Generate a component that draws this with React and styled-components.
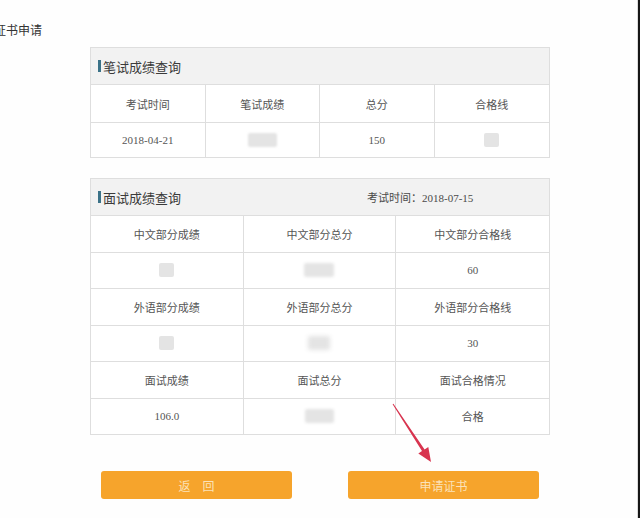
import styled, { createGlobalStyle } from "styled-components";

const Global = createGlobalStyle`
  html, body {
    margin: 0;
    padding: 0;
    background: #fff;
  }
  body {
    font-family: "Liberation Serif", "Noto Sans CJK SC", serif;
  }
`;

// 整页
const Page = styled.div`
  position: relative;
  box-sizing: border-box;
  width: 640px;
  height: 518px;
  padding-top: 23px;
  background: #fefefe;
  border-right: 2px solid #161616;
  box-shadow: inset -1px 0 0 #dcdcdc;
  overflow: hidden;
`;

const PageTitle = styled.div`
  margin-left: -6px;
  font-family: "Noto Sans CJK SC", sans-serif;
  font-size: 12px;
  line-height: 14px;
  color: #333;
`;

const Content = styled.div`
  width: 460px;
  margin: 10px 0 0 90px;
  display: flex;
  flex-direction: column;
  gap: 20px;
`;

const Panel = styled.div`
  border: 1px solid #dedede;
  border-bottom: none;
  background: #fff;
`;

const PanelHead = styled.div`
  box-sizing: border-box;
  height: 37px;
  display: flex;
  align-items: center;
  justify-content: space-between;
  padding: 0 0 0 7px;
  background: #f2f2f2;
  border-bottom: 1px solid #dedede;
`;

const HeadTitle = styled.div`
  display: flex;
  align-items: center;
  gap: 2px;
  font-family: "Noto Sans CJK SC", sans-serif;
  font-size: 13px;
  color: #3a3a3a;

  &::before {
    content: "";
    width: 3px;
    height: 12px;
    background: #3b7288;
  }
`;

const HeadInfo = styled.div`
  width: 182px;
  font-size: 11px;
  color: #4a4a4a;
`;

const Grid = styled.div`
  display: grid;
  grid-template-columns: repeat(${props => props.cols}, 1fr);
`;

const Cell = styled.div`
  box-sizing: border-box;
  height: ${props => props.h || 37}px;
  display: flex;
  align-items: center;
  justify-content: center;
  border-bottom: 1px solid #dedede;
  border-right: 1px solid #dedede;
  font-family: ${props => props.num ? `"Liberation Serif", serif` : `"Noto Sans CJK SC", sans-serif`};
  font-size: 11px;
  color: #555;

  &:nth-child(${props => props.cols}n) {
    border-right: none;
  }
`;

const Blur = styled.span`
  display: block;
  width: ${props => props.w}px;
  height: ${props => props.h || 14}px;
  border-radius: 2px;
  background: #e4e4e4;
  filter: blur(${props => props.blur || 0.6}px);
`;

const Buttons = styled.div`
  display: flex;
  justify-content: space-between;
  padding: 26px 11px 0 11px;
`;

const Button = styled.button`
  width: 191px;
  height: 28px;
  border: none;
  border-radius: 3px;
  background: #f6a42c;
  color: #fbe2b8;
  font-family: "Noto Sans CJK SC", sans-serif;
  font-size: 12px;
  cursor: pointer;
`;

const Arrow = styled.svg`
  position: absolute;
  left: 385px;
  top: 398px;
`;

const written = [
  ["考试时间", "笔试成绩", "总分", "合格线"],
  ["2018-04-21", <Blur w={29} blur={1.2} />, "150", <Blur w={15} />],
];

const interview = [
  ["中文部分成绩", "中文部分总分", "中文部分合格线"],
  [<Blur w={15} />, <Blur w={30} blur={1.6} />, "60"],
  ["外语部分成绩", "外语部分总分", "外语部分合格线"],
  [<Blur w={15} />, <Blur w={22} blur={2} />, "30"],
  ["面试成绩", "面试总分", "面试合格情况"],
  ["106.0", <Blur w={29} blur={1.4} />, "合格"],
];

const isNum = v => typeof v === "string" && /^[\d.\-]+$/.test(v);

function App() {
  return (
    <>
      <Global />
      <Page>
        <PageTitle>证书申请</PageTitle>
        <Content>
          <Panel>
            <PanelHead>
              <HeadTitle>笔试成绩查询</HeadTitle>
            </PanelHead>
            <Grid cols={4}>
              {written.flat().map((v, i) => (
                <Cell key={i} cols={4} h={i < 4 ? 38 : 35} num={isNum(v)}>{v}</Cell>
              ))}
            </Grid>
          </Panel>

          <Panel>
            <PanelHead>
              <HeadTitle>面试成绩查询</HeadTitle>
              <HeadInfo>考试时间：2018-07-15</HeadInfo>
            </PanelHead>
            <Grid cols={3}>
              {interview.flat().map((v, i) => (
                <Cell key={i} cols={3} h={36.5} num={isNum(v)}>{v}</Cell>
              ))}
            </Grid>
          </Panel>
        </Content>

        <Content>
          <Buttons>
            <Button>返　回</Button>
            <Button>申请证书</Button>
          </Buttons>
        </Content>

        <Arrow width="55" height="70" viewBox="0 0 55 70">
          <polygon
            points="7.6,6.3 8.4,5.7 39.6,51.5 43.3,49 46,64 33.3,55.6 37,53.1"
            fill="#d8344f"
          />
        </Arrow>
      </Page>
    </>
  );
}

export default App;
